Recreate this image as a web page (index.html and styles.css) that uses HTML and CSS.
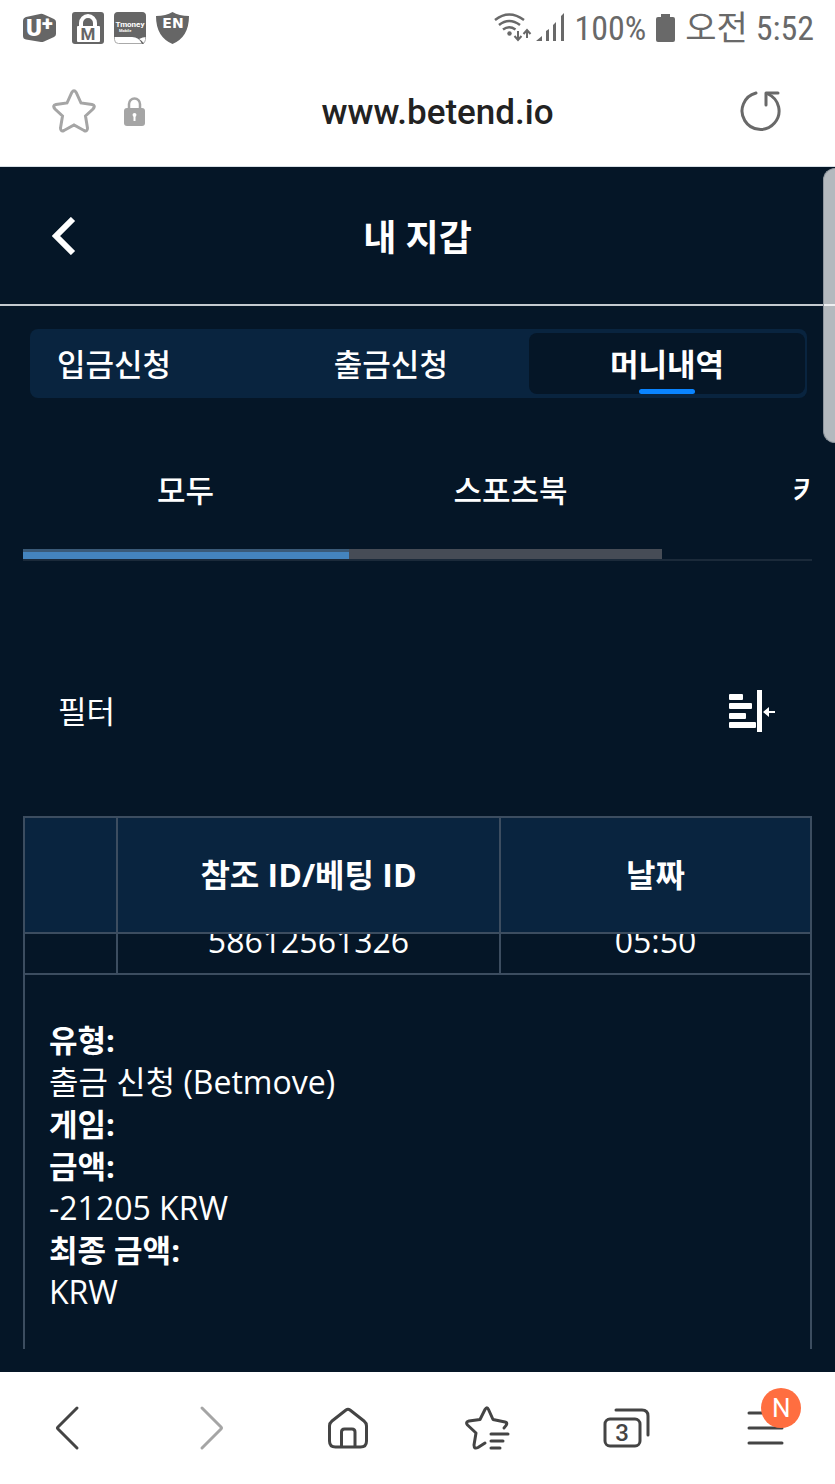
FILE: index.html
```html
<!DOCTYPE html>
<html lang="ko">
<head>
  <meta charset="UTF-8">
  <meta name="viewport" content="width=device-width, initial-scale=1">
  <title>내 지갑</title>
  <link rel="stylesheet" href="styles.css">
</head>
<body>
  <div class="status-bar">
    <div class="status-left">
      <svg width="33" height="32" viewBox="0 0 33 32">
        <path d="M3 5 L17 2 Q19 1.500 21 2.500 L31 7 Q33 8 33 10 V22 Q33 24 31 25 L21 29.500 Q20 30 18 30 L3 27.500 Q0 27 0 24 V9 Q0 6 3 5 Z" fill="#666"/>
        <text class="logo-u" x="3" y="24">U</text>
        <text class="logo-plus" x="19" y="18">+</text>
      </svg>
      <svg class="app-icon" width="32" height="32" viewBox="0 0 32 32">
        <rect width="32" height="32" rx="3" fill="#666"/>
        <path d="M9 17 V11 A7 7 0 0 1 23 11 V17" fill="none" stroke="#fff" stroke-width="4"/>
        <rect x="5" y="14" width="23" height="16" rx="1" fill="#fff"/>
        <text class="logo-m" x="16" y="28">M</text>
      </svg>
      <svg width="32" height="32" viewBox="0 0 32 32">
        <rect x="0.500" y="0.500" width="31" height="31" rx="4" fill="#fff" stroke="#aaa"/>
        <path d="M0 25 V4 Q0 0 4 0 H28 Q32 0 32 4 V25 Q29 25 25 27 Q29 29 30 32 H28 Q25 25 18 25 Z" fill="#666"/>
        <text class="logo-t" x="16" y="15">Tmoney</text>
        <text class="logo-mobile" x="5" y="20">Mobile</text>
      </svg>
      <svg width="33" height="32" viewBox="0 0 33 32">
        <path d="M16.500 0 Q23 4 33 4 Q33 25 16.500 32 Q0 25 0 4 Q10 4 16.500 0 Z" fill="#666"/>
        <text class="logo-en" x="17" y="16">EN</text>
      </svg>
    </div>
    <div class="status-right">
      <svg width="70" height="30" viewBox="0 0 70 30">
        <g fill="none" stroke="#696969" stroke-width="2.500">
          <path d="M1 7 Q15 -4 30 7"/>
          <path d="M5 12 Q15 4 26 12"/>
          <path d="M9 16.500 Q15 12 21.500 16.500"/>
          <path d="M24 18 V27 M20.500 23 L24 27 L27.500 23 M33 25 V17 M29.500 21 L33 17 L36.500 21" stroke-width="2"/>
        </g>
        <circle cx="15.500" cy="20.500" r="2.200" fill="#696969"/>
        <path d="M42 28 L48 23 V28 Z M52 28 V18 L55 16 V28 Z M59 28 V12 L62 9 V28 Z M67 28 V3 L70 0 V28 Z" fill="#696969"/>
      </svg>
      <span>100%</span>
      <svg width="19" height="28" viewBox="0 0 19 28"><path d="M5 0 H14 V3 H17 Q19 3 19 5 V26 Q19 28 17 28 H2 Q0 28 0 26 V5 Q0 3 2 3 H5 Z" fill="#696969"/></svg>
      <span>오전 5:52</span>
    </div>
  </div>

  <div class="address-bar">
    <button class="icon-btn" aria-label="즐겨찾기">
      <svg width="44" height="44" viewBox="0 0 44 44"><path d="M19.800 3.500 Q22 0 24.200 3.500 L29 14 L40 15.500 Q44 16.500 41 20 L33.500 27 L35.500 39 Q35.500 43 32 41.500 L22 36 L12 41.500 Q8.500 43 8.500 39 L10.500 27 L3 20 Q0 16.500 4 15.500 L15 14 Z" fill="none" stroke="#a5a5a5" stroke-width="3"/></svg>
    </button>
    <svg width="21" height="29" viewBox="0 0 21 29">
      <path d="M5 13 V7 A5.500 5.500 0 0 1 16 7 V13" fill="none" stroke="#a5a5a5" stroke-width="2.500"/>
      <rect y="11" width="21" height="18" rx="3" fill="#a5a5a5"/>
      <path d="M8.500 18 Q8.500 16 10.500 16 Q12.500 16 12.500 18 L11.500 20 V24 H9.500 V20 Z" fill="#fff"/>
    </svg>
    <div class="url">www.betend.io</div>
    <button class="icon-btn reload" aria-label="새로고침">
      <svg width="42" height="42" viewBox="0 0 42 42">
        <path d="M16 3 A18.500 18.500 0 1 0 28 4" fill="none" stroke="#696969" stroke-width="3" stroke-linecap="round"/>
        <path d="M26 15 V3 H38" fill="none" stroke="#696969" stroke-width="3" stroke-linecap="round" stroke-linejoin="round"/>
      </svg>
    </button>
  </div>

  <main class="page">
    <div class="scroll-thumb"></div>
    <header class="page-header">
      <button class="icon-btn" aria-label="뒤로">
        <svg width="24" height="38" viewBox="0 0 24 38"><path d="M21 2 L4 19 L21 36" fill="none" stroke="#fff" stroke-width="6"/></svg>
      </button>
      <h1>내 지갑</h1>
    </header>

    <nav class="wallet-tabs">
      <button>입금신청</button>
      <button>출금신청</button>
      <button class="active">머니내역</button>
    </nav>

    <section class="content">
      <div class="categories">
        <button>모두</button>
        <button>스포츠북</button>
        <button>카지노</button>
      </div>
      <div class="category-line">
        <div class="category-track"><div class="category-active"></div></div>
      </div>

      <div class="filter">
        <span>필터</span>
        <button class="icon-btn" aria-label="필터">
          <svg width="47" height="42" viewBox="0 0 47 42" fill="#fff">
            <rect x="1" y="4" width="14" height="6" rx="1"/>
            <rect x="1" y="13" width="23" height="6" rx="1"/>
            <rect x="1" y="23" width="17" height="6" rx="1"/>
            <rect x="1" y="32" width="27" height="6" rx="1"/>
            <rect x="29" width="5" height="42"/>
            <path d="M35 22 L41 17 V21 H47 V23 H41 V27 Z"/>
          </svg>
        </button>
      </div>

      <table class="history">
        <colgroup>
          <col class="col-toggle">
          <col>
          <col class="col-date">
        </colgroup>
        <thead>
          <tr><th></th><th>참조 ID/베팅 ID</th><th>날짜</th></tr>
        </thead>
        <tbody>
          <tr>
            <td></td>
            <td><div class="scrolled">58612561326</div></td>
            <td><div class="scrolled">05:50</div></td>
          </tr>
          <tr>
            <td colspan="3" class="details">
              <dl>
                <dt>유형:</dt>
                <dd>출금 신청 (Betmove)</dd>
                <dt>게임:</dt>
                <dt>금액:</dt>
                <dd>-21205 KRW</dd>
                <dt>최종 금액:</dt>
                <dd>KRW</dd>
              </dl>
            </td>
          </tr>
        </tbody>
      </table>
    </section>
  </main>

  <nav class="bottom-bar">
    <button aria-label="이전">
      <svg width="48" height="48" viewBox="0 0 48 48"><path d="M31 4 L12 23 Q11 24 12 25 L31 44"/></svg>
    </button>
    <button class="disabled" aria-label="다음">
      <svg width="48" height="48" viewBox="0 0 48 48"><path d="M17 4 L36 23 Q37 24 36 25 L17 44"/></svg>
    </button>
    <button aria-label="홈">
      <svg width="48" height="48" viewBox="0 0 48 48"><path d="M22 6 Q24 4.500 26 6 L40 17 Q42.500 19 42.500 22 V37 Q42.500 43 36.500 43 H11.500 Q5.500 43 5.500 37 V22 Q5.500 19 8 17 Z M17.500 42 V28 Q17.500 25 20.500 25 H28 Q31 25 31 28 V42"/></svg>
    </button>
    <button aria-label="북마크">
      <svg width="48" height="48" viewBox="0 0 48 48"><path d="M41 24 Q46 19 42 18 L30 15.500 L25.500 5.500 Q24 2 22 5.500 L17 15.500 L6 17 Q2 18 4.500 21 L13 29 L11 41 Q11 45.500 15 43.500 L22 39 M28 30 H45 M28 37 H40 M28 44 H37"/></svg>
    </button>
    <button aria-label="탭">
      <svg width="48" height="48" viewBox="0 0 48 48">
        <rect x="3" y="15" width="35" height="27" rx="5"/>
        <path d="M14 6 H40 Q46 6 46 12 V31"/>
        <text class="tab-count" x="20" y="37">3</text>
      </svg>
    </button>
    <button aria-label="메뉴">
      <svg width="48" height="48" viewBox="0 0 48 48"><path d="M8 9 H41 M8 24 H41 M8 39 H41"/></svg>
      <span class="badge">N</span>
    </button>
  </nav>
</body>
</html>
```

FILE: styles.css
```css
* {
  box-sizing: border-box;
}

body {
  margin: 0;
  min-height: 100vh;
  display: flex;
  flex-direction: column;
  background-color: #fff;
  font-family: 'Open Sans', 'Noto Sans CJK KR', sans-serif;
  font-size: 32px;
  line-height: 42px;
}

button {
  padding: 0;
  border: none;
  background: none;
  color: inherit;
  font: inherit;
  cursor: pointer;
}

svg {
  display: block;
  flex-shrink: 0;
}

/* phone status bar */
.status-bar {
  display: flex;
  justify-content: space-between;
  align-items: center;
  height: 56px;
  padding: 0 21px 0 23px;
  color: #696969;
  font-family: 'Roboto Condensed', 'Liberation Sans Narrow', Roboto, 'Noto Sans CJK KR', sans-serif;
  font-size: 34px;
  white-space: nowrap;
}

.status-left,
.status-right {
  display: flex;
  align-items: center;
  gap: 10px;
}

.app-icon {
  margin-left: 6px;
}

.status-left text {
  fill: #fff;
  font-family: Roboto, sans-serif;
  font-weight: bold;
}

.status-left .logo-u {
  font-size: 24px;
  font-weight: 900;
}

.status-left .logo-plus {
  font-size: 20px;
  font-weight: 900;
}

.status-left .logo-m {
  fill: #666;
  font-size: 17px;
  text-anchor: middle;
}

.logo-t {
  font-size: 8px;
  text-anchor: middle;
}

.logo-mobile {
  font-size: 4px;
}

.status-left .logo-en {
  font-family: 'DejaVu Sans', sans-serif;
  font-size: 14px;
  text-anchor: middle;
}

/* browser address bar */
.address-bar {
  display: flex;
  align-items: center;
  gap: 28px;
  height: 111px;
  padding: 0 53px 0 52px;
  border-bottom: 1px solid #d7dfe5;
}

.url {
  flex: 1;
  padding-top: 4px;
  color: #222;
  font-family: Roboto, sans-serif;
  font-size: 35px;
  font-weight: 500;
  text-align: center;
}

.reload {
  margin-left: 10px;
}

/* site */
.page {
  position: relative;
  flex: 1;
  background-color: #051627;
  color: #fff;
}

.scroll-thumb {
  position: absolute;
  top: 1px;
  right: 0;
  width: 12px;
  height: 275px;
  border: 1px solid #8f969e;
  border-right: none;
  border-radius: 12px 0 0 12px;
  background-color: rgba(255, 255, 255, 0.7);
}

.page-header {
  display: grid;
  grid-template-columns: 24px 1fr 24px;
  align-items: center;
  height: 139px;
  padding: 0 52px;
  border-bottom: 2px solid #c5cacf;
}

.page-header h1 {
  margin: 0;
  padding-top: 4px;
  font-size: 36px;
  text-align: center;
}

.wallet-tabs {
  display: grid;
  grid-template-columns: 8fr 10fr 10fr;
  height: 69px;
  margin: 23px 28px 0 30px;
  padding: 4px 2px;
  border-radius: 8px;
  background-color: #09243f;
  font-size: 31px;
  font-weight: 500;
}

.wallet-tabs button:first-child {
  padding-left: 25px;
  text-align: left;
}

.wallet-tabs .active {
  display: flex;
  flex-direction: column;
  align-items: center;
  justify-content: space-between;
  padding-top: 10px;
  border-radius: 8px;
  background-color: #051627;
  font-weight: bold;
}

.wallet-tabs .active::after {
  content: '';
  width: 56px;
  height: 5px;
  border-radius: 3px;
  background-color: #0a84ff;
}

.content {
  padding: 24px 23px 23px;
}

.categories {
  display: flex;
  height: 127px;
  overflow: hidden;
  font-size: 31px;
  font-weight: 500;
}

.categories button {
  flex: 0 0 325px;
  padding-top: 8px;
}

.category-line {
  border-bottom: 2px solid #1b2a3a;
}

.category-track {
  width: 81%;
  height: 10px;
  background-color: #464c56;
}

.category-active {
  width: 51%;
  height: 10px;
  border-top: 3px solid #3a5a78;
  background-color: #4484be;
}

.filter {
  display: flex;
  justify-content: space-between;
  align-items: center;
  height: 200px;
  margin: 50px 0 5px;
  padding: 0 37px 0 35px;
  font-size: 31px;
}

.history {
  width: 100%;
  border-collapse: collapse;
  table-layout: fixed;
}

.col-toggle {
  width: 93px;
}

.col-date {
  width: 311px;
}

.history th,
.history td {
  padding: 0;
  border: 2px solid #3c4d60;
  text-align: center;
}

.history th {
  height: 116px;
  background-color: #09243f;
}

/* first row is scrolled halfway under the header */
.scrolled {
  display: flex;
  justify-content: center;
  align-items: flex-end;
  height: 39px;
  padding-bottom: 11px;
  overflow: hidden;
}

.history .details {
  padding: 44px 24px 36px;
  border-bottom: none;
  text-align: left;
}

.details dl,
.details dd {
  margin: 0;
}

.details dt {
  font-size: 31px;
  font-weight: bold;
}

/* browser toolbar */
.bottom-bar {
  display: flex;
  justify-content: space-around;
  align-items: center;
  height: 112px;
}

.bottom-bar button {
  position: relative;
}

.bottom-bar svg {
  fill: none;
  stroke: #444;
  stroke-width: 3;
  stroke-linecap: round;
  stroke-linejoin: round;
}

.bottom-bar .disabled svg {
  stroke: #a5a5a5;
}

.bottom-bar .tab-count {
  fill: #444;
  stroke: none;
  font-family: Roboto, sans-serif;
  font-size: 24px;
  font-weight: 500;
  text-anchor: middle;
}

.badge {
  position: absolute;
  top: -16px;
  right: -12px;
  width: 40px;
  height: 40px;
  border-radius: 50%;
  background-color: #ff6e40;
  color: #fff;
  font-family: Roboto, sans-serif;
  font-size: 26px;
  line-height: 40px;
}
```
